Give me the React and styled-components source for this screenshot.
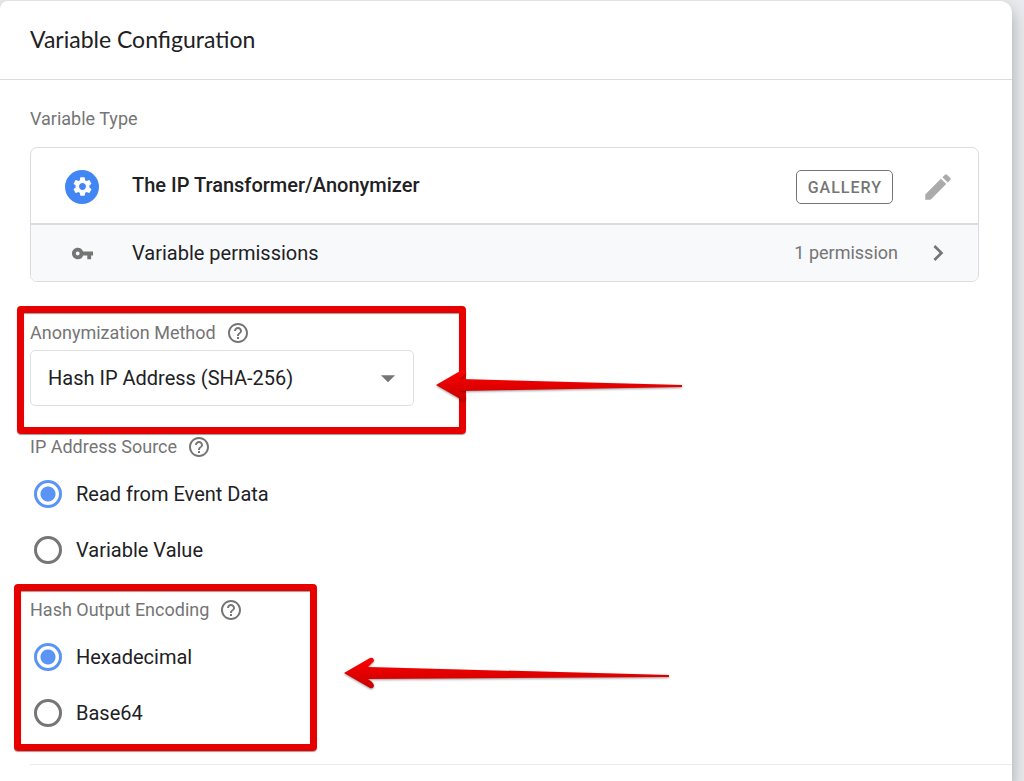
import { useState } from 'react'
import styled, { createGlobalStyle, css } from 'styled-components'
import {
  MdArrowDropDown,
  MdChevronRight,
  MdEdit,
  MdHelpOutline,
  MdSettings,
  MdVpnKey
} from 'react-icons/md'

const v = {
  text: '#212124',
  grey: '#757575',
  line: '#dadce0',
  blue: '#4285f4',
  radio: '#5a95f5',
  red: '#e60000'
}

const GlobalStyle = createGlobalStyle`
  * {
    box-sizing: border-box;
  }

  body {
    margin: 0;
    background: #e8eaed;
    color: ${v.text};
    font-family: Roboto, sans-serif;
    font-size: 20px;
    line-height: 24px;
  }

  button, select {
    font: inherit;
    color: inherit;
  }
`

const Page = styled.div`
  min-height: 100vh;
  padding: 1px 12px 0 0;
  display: flex;
  overflow: hidden;
`

const Panel = styled.main`
  flex: 1;
  min-width: 0;
  background: #fff;
  border-radius: 8px 12px 0 0;
  box-shadow: 0 8px 16px rgba(60, 64, 67, 0.4);
`

const Header = styled.header`
  padding: 22px 30px 24px;
  border-bottom: 1px solid ${v.line};
`

const Heading = styled.h1`
  margin: 0;
  font-family: 'Google Sans', Lato, sans-serif;
  font-size: 23px;
  font-weight: 400;
  line-height: 32px;
`

const Body = styled.div`
  padding: 27px 0 16px 30px;
`

const Label = styled.div`
  display: flex;
  align-items: center;
  gap: 10px;
  height: 24px;
  font-size: 18px;
  color: ${v.grey};
`

const Card = styled.section`
  margin: 16px 33px 39px 0;
  border: 1px solid ${v.line};
  border-radius: 7px;
  overflow: hidden;
`

const CardRow = styled.div`
  display: flex;
  align-items: center;
  min-height: 75px;
  padding: 2px 23px 0 34px;

  ${({ $muted }) => $muted && css`
    min-height: 58px;
    padding-top: 0;
    border-top: 2px solid ${v.line};
    background: #f8f9fb;
  `}
`

const RowIcon = styled.span`
  display: flex;
  align-items: center;
  justify-content: center;
  width: 34px;
  height: 34px;
  margin-right: 33px;
  border-radius: 50%;
  color: ${({ $filled }) => $filled ? '#fff' : v.grey};
  background: ${({ $filled }) => $filled ? v.blue : 'none'};
`

const RowTitle = styled.span`
  flex: 1;
  font-weight: ${({ $strong }) => $strong ? 500 : 400};
  padding-bottom: ${({ $strong }) => $strong ? 4 : 0}px;
`

const Count = styled.span`
  margin-right: 23px;
  font-size: 18px;
  color: ${v.grey};
`

const GalleryButton = styled.button`
  height: 34px;
  margin-right: 28px;
  padding: 3px 10px 0 11px;
  border: 1px solid ${v.grey};
  border-radius: 5px;
  background: #fff;
  color: ${v.grey};
  font-size: 16px;
  font-weight: 500;
  letter-spacing: 1px;
`

const IconButton = styled.button`
  display: flex;
  align-items: center;
  justify-content: center;
  width: 34px;
  height: 34px;
  padding: 0;
  border: 0;
  background: none;
  color: ${({ $light }) => $light ? '#ababab' : v.grey};
`

const Field = styled.section`
  position: relative;
  margin-bottom: ${({ $space }) => $space}px;
`

const SelectBox = styled.div`
  position: relative;
  width: 384px;
  max-width: 100%;
  padding-top: 5px;

  svg {
    position: absolute;
    right: 9px;
    bottom: 11px;
    color: ${v.grey};
    pointer-events: none;
  }
`

const Select = styled.select`
  display: block;
  width: 100%;
  height: 56px;
  padding: 0 48px 0 17px;
  border: 1px solid #dfdfe1;
  border-radius: 5px;
  background: #fff;
  appearance: none;
`

const RadioList = styled.div`
  padding-top: 7px;
`

const RadioRow = styled.label`
  display: flex;
  align-items: center;
  height: 56px;
  padding-left: 4px;
  gap: 14px;
`

const Radio = styled.input`
  width: 28px;
  height: 28px;
  margin: 0;
  border: 3px solid ${v.grey};
  border-radius: 50%;
  appearance: none;

  &:checked {
    border-color: ${v.radio};
    background: radial-gradient(circle, ${v.radio} 7px, transparent 8px);
  }
`

const Rule = styled.hr`
  margin: 0;
  border: 0;
  border-top: 1px solid #e8eaed;
`

// red frame laid over a field
const Frame = styled.div`
  position: absolute;
  top: ${({ $top }) => $top}px;
  left: ${({ $left }) => $left}px;
  width: ${({ $width }) => $width}px;
  height: ${({ $height }) => $height}px;
  border: 7px solid ${v.red};
  border-radius: 4px;
  box-shadow: 0 1px 1px rgba(0, 0, 0, 0.4), inset 0 1px 1px rgba(0, 0, 0, 0.4);
  pointer-events: none;
`

const ArrowSvg = styled.svg`
  position: absolute;
  top: ${({ $top }) => $top}px;
  left: ${({ $left }) => $left}px;
  overflow: visible;
  filter: drop-shadow(0 1px 1px rgba(0, 0, 0, 0.4));
  pointer-events: none;
`

const Arrow = ({ id, length, drop, top, left }) => (
  <ArrowSvg $top={top} $left={left} width={length} height="32" aria-hidden="true">
    <defs>
      <linearGradient id={id} x1="0" y1="0" x2="0" y2="1">
        <stop offset="0" stopColor="#ff0000" />
        <stop offset="1" stopColor="#c80000" />
      </linearGradient>
    </defs>
    <path
      fill={`url(#${id})`}
      d={`M0 16 L26 1 Q29 0 30 3 Q30 5 28 6 L24 10 L${length} ${15 + drop} V${17 + drop} L24 22 L28 25 Q30 27 30 29 Q29 32 26 31 Z`}
    />
  </ArrowSvg>
)

const FieldLabel = ({ id, htmlFor, children }) => (
  <Label>
    {htmlFor ? <label htmlFor={htmlFor}>{children}</label> : <span id={id}>{children}</span>}
    <MdHelpOutline size={24} />
  </Label>
)

const RadioField = ({ name, label, options, space, children }) => {
  const [value, setValue] = useState(options[0])

  return (
    <Field $space={space} role="radiogroup" aria-labelledby={name}>
      <FieldLabel id={name}>{label}</FieldLabel>
      <RadioList>
        {options.map(option => (
          <RadioRow key={option}>
            <Radio
              type="radio"
              name={`${name}-value`}
              checked={value === option}
              onChange={() => setValue(option)}
            />
            {option}
          </RadioRow>
        ))}
      </RadioList>
      {children}
    </Field>
  )
}

const App = () => (
  <Page>
    <GlobalStyle />
    <Panel>
      <Header>
        <Heading>Variable Configuration</Heading>
      </Header>
      <Body>
        <Label>Variable Type</Label>
        <Card>
          <CardRow>
            <RowIcon $filled><MdSettings size={23} /></RowIcon>
            <RowTitle $strong>The IP Transformer/Anonymizer</RowTitle>
            <GalleryButton>GALLERY</GalleryButton>
            <IconButton $light aria-label="Edit"><MdEdit size={34} /></IconButton>
          </CardRow>
          <CardRow $muted>
            <RowIcon><MdVpnKey size={23} /></RowIcon>
            <RowTitle>Variable permissions</RowTitle>
            <Count>1 permission</Count>
            <IconButton aria-label="Show permissions"><MdChevronRight size={32} /></IconButton>
          </CardRow>
        </Card>

        <Field $space={29}>
          <FieldLabel htmlFor="method">Anonymization Method</FieldLabel>
          <SelectBox>
            <Select id="method">
              <option>Hash IP Address (SHA-256)</option>
            </Select>
            <MdArrowDropDown size={34} />
          </SelectBox>
          <Frame $top={-15} $left={-13} $width={449} $height={128} />
          <Arrow id="arrow-method" length={246} drop={1} top={48} left={406} />
        </Field>

        <RadioField
          name="source"
          label="IP Address Source"
          options={['Read from Event Data', 'Variable Value']}
          space={20}
        />

        <RadioField
          name="encoding"
          label="Hash Output Encoding"
          options={['Hexadecimal', 'Base64']}
          space={23}
        >
          <Frame $top={-14} $left={-16} $width={303} $height={167} />
          <Arrow id="arrow-encoding" length={325} drop={3} top={59} left={314} />
        </RadioField>
        <Rule />
      </Body>
    </Panel>
  </Page>
)

export default App
